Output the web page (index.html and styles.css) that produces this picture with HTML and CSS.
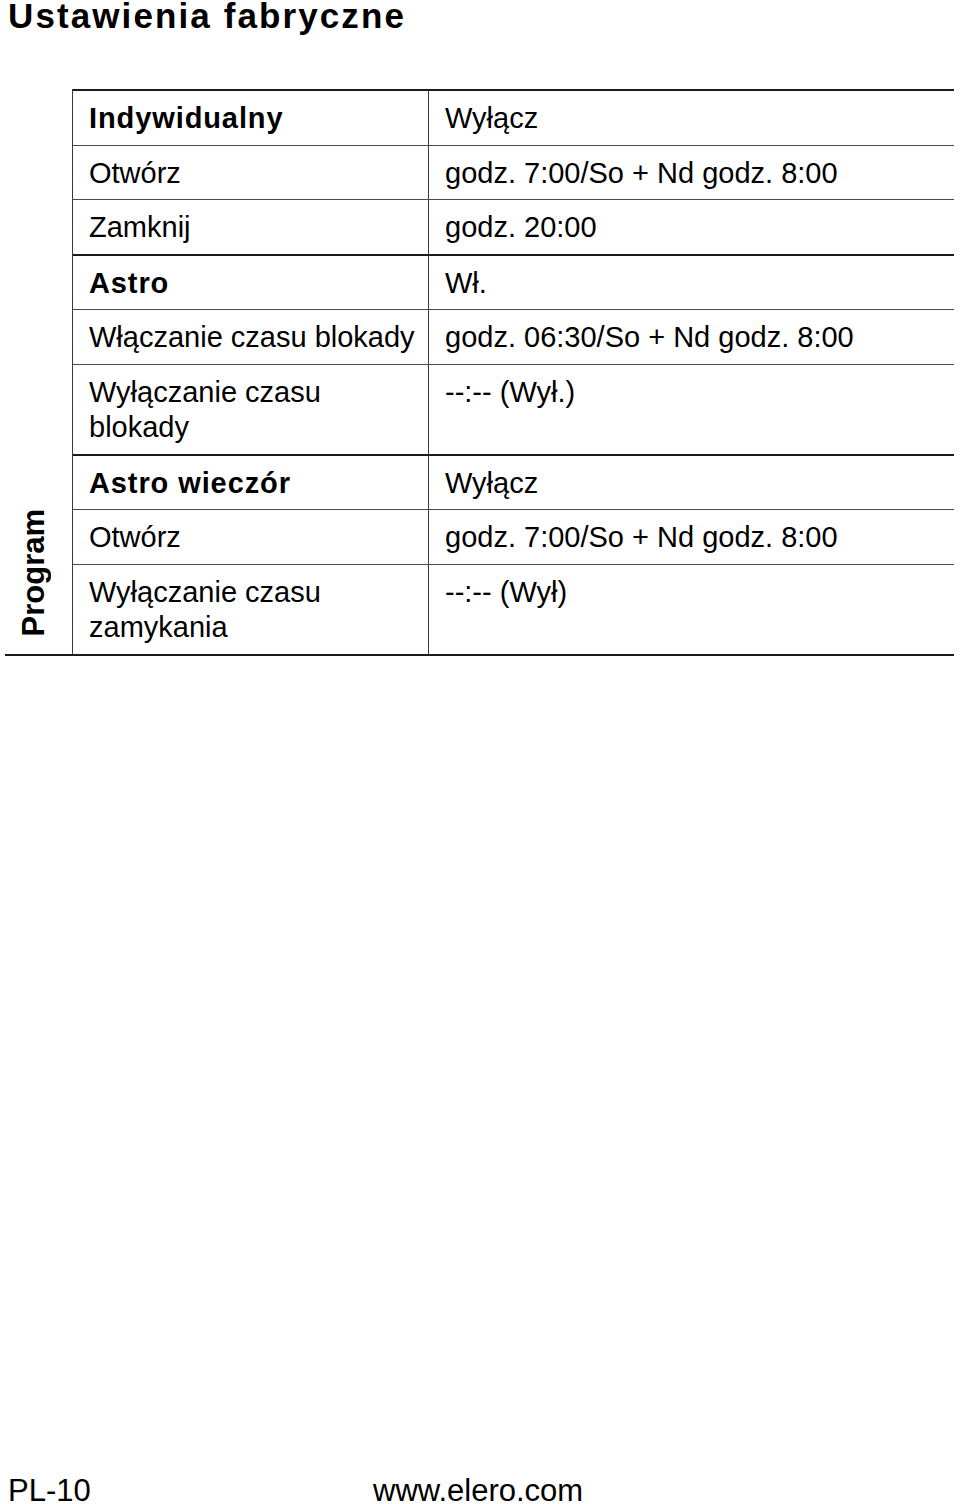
FILE: index.html
```html
<!DOCTYPE html>
<html lang="pl">
<head>
<meta charset="utf-8">
<title>Ustawienia fabryczne</title>
<link rel="stylesheet" href="styles.css">
</head>
<body>
<div class="page">
  <h1 class="title">Ustawienia fabryczne</h1>

  <div class="sheet">
    <div class="side"><span class="side-label">Program</span></div>
    <div class="rows">
      <div class="row first">
        <div class="cell label bold">Indywidualny</div>
        <div class="cell value">Wyłącz</div>
      </div>
      <div class="row">
        <div class="cell label">Otwórz</div>
        <div class="cell value">godz. 7:00/So + Nd godz. 8:00</div>
      </div>
      <div class="row">
        <div class="cell label">Zamknij</div>
        <div class="cell value">godz. 20:00</div>
      </div>
      <div class="row major">
        <div class="cell label bold">Astro</div>
        <div class="cell value">Wł.</div>
      </div>
      <div class="row">
        <div class="cell label nowrap">Włączanie czasu blokady</div>
        <div class="cell value">godz. 06:30/So + Nd godz. 8:00</div>
      </div>
      <div class="row">
        <div class="cell label">Wyłączanie czasu<br>blokady</div>
        <div class="cell value">--:-- (Wył.)</div>
      </div>
      <div class="row major">
        <div class="cell label bold">Astro wieczór</div>
        <div class="cell value">Wyłącz</div>
      </div>
      <div class="row">
        <div class="cell label">Otwórz</div>
        <div class="cell value">godz. 7:00/So + Nd godz. 8:00</div>
      </div>
      <div class="row">
        <div class="cell label">Wyłączanie czasu<br>zamykania</div>
        <div class="cell value">--:-- (Wył)</div>
      </div>
    </div>
  </div>

  <footer class="footer">
    <span class="page-no">PL-10</span>
    <span class="site">www.elero.com</span>
  </footer>
</div>
</body>
</html>
```

FILE: styles.css
```css
html, body {
  margin: 0;
  padding: 0;
  background: #ffffff;
  overflow: hidden;
}

body {
  font-family: "Liberation Sans", Arial, sans-serif;
  color: #000000;
}

.page {
  height: 1504px;
  display: flex;
  flex-direction: column;
}

.title {
  margin: 0 0 0 8px;
  font-size: 35px;
  line-height: 32px;
  font-weight: bold;
  letter-spacing: 2.1px;
}

.sheet {
  display: flex;
  margin: 57px 0 0 5px;
  width: 949px;
  border-bottom: 2px solid #1a1a1a;
}

.side {
  box-sizing: border-box;
  width: 68px;
  flex: none;
  border-right: 1px solid #3a3a3a;
  display: flex;
  align-items: flex-end;
  padding: 0 0 17px 13px;
}

.side-label {
  writing-mode: vertical-rl;
  transform: rotate(180deg);
  font-weight: bold;
  font-size: 31px;
  line-height: 31px;
}

.rows {
  flex: 1;
  border-top: 2px solid #1a1a1a;
}

.row {
  display: grid;
  grid-template-columns: 356px 1fr;
  border-top: 1px solid #4a4a4a;
}

.row.first {
  border-top: none;
}

.row.major {
  border-top: 2px solid #1a1a1a;
}

.cell {
  box-sizing: border-box;
  padding: 10px 8px 8px 16px;
  font-size: 29px;
  line-height: 35.5px;
}

.label {
  border-right: 1px solid #3a3a3a;
}

.bold {
  font-weight: bold;
  letter-spacing: 0.9px;
}

.nowrap {
  white-space: nowrap;
}

.footer {
  margin-top: auto;
  height: 26px;
  display: grid;
  grid-template-columns: 365px auto;
  padding-left: 8px;
  font-size: 31px;
  line-height: 26px;
}
```
